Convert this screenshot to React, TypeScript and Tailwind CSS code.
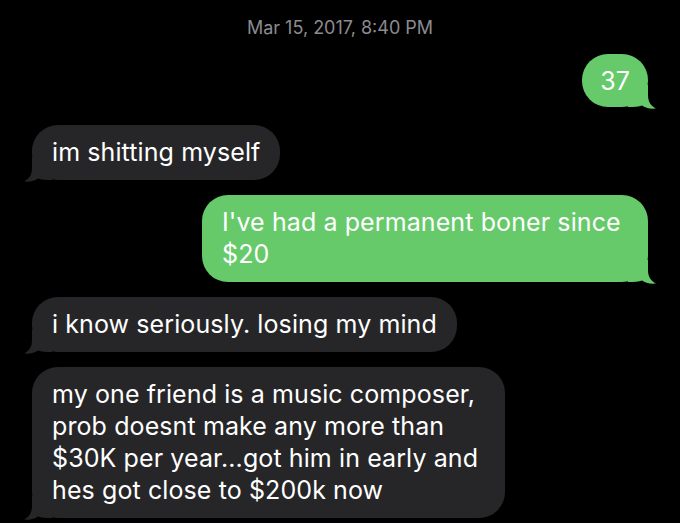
import React from "react";

type Side = "in" | "out";

function Tail({ side }: { side: Side }) {
  const fill = side === "out" ? "#66ca6a" : "#262628";
  return (
    <svg
      width="28"
      height="24"
      viewBox="0 0 28 24"
      className={
        side === "out"
          ? "absolute right-[-8px] bottom-[-2px]"
          : "absolute left-[-8px] bottom-[-2px] -scale-x-100"
      }
    >
      <path
        d="M20 0 L20 10 C20 17 23 21 28 23.5 C22 24 17 23 14 20.5 C11 22 6 22 0 22 L0 0 Z"
        fill={fill}
      />
    </svg>
  );
}

function Bubble({
  side,
  children,
  className = "",
}: {
  side: Side;
  children: React.ReactNode;
  className?: string;
}) {
  const tone =
    side === "out" ? "bg-[#66ca6a] self-end" : "bg-[#262628] self-start";
  return (
    <div
      className={`relative rounded-[26px] px-5 pt-[11px] pb-[12px] text-[25px] leading-[32px] tracking-[0.1px] text-white ${tone} ${className}`}
    >
      <Tail side={side} />
      <div className="relative">{children}</div>
    </div>
  );
}

export default function App() {
  return (
    <div
      className="w-[680px] h-[523px] overflow-hidden bg-black flex flex-col px-8"
      style={{ fontFamily: "Inter, 'Liberation Sans', sans-serif" }}
    >
      <div className="text-center text-[18px] leading-[22px] text-[#8b8b90] pt-[17px]">
        Mar 15, 2017, 8:40 PM
      </div>

      <Bubble side="out" className="mt-[15px] h-[53px] pt-[10px] px-[18px]">
        37
      </Bubble>

      <Bubble side="in" className="mt-[18px]">
        im shitting myself
      </Bubble>

      <Bubble side="out" className="mt-[15px] w-[446px]">
        I've had a permanent boner since
        <br />
        $20
      </Bubble>

      <Bubble side="in" className="mt-[15px]">
        i know seriously. losing my mind
      </Bubble>

      <Bubble side="in" className="mt-[15px] w-[473px]">
        my one friend is a music composer,
        <br />
        prob doesnt make any more than
        <br />
        $30K per year...got him in early and
        <br />
        hes got close to $200k now
      </Bubble>
    </div>
  );
}
